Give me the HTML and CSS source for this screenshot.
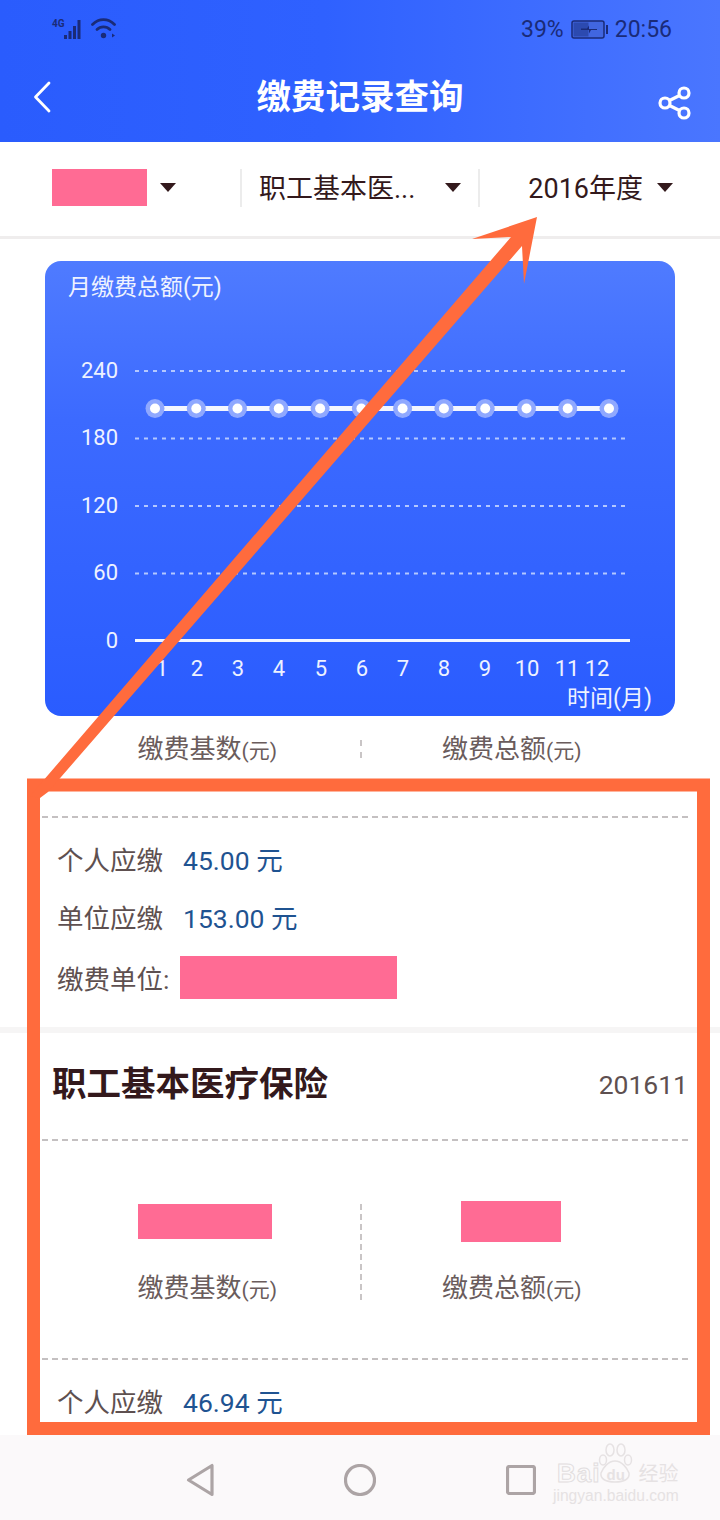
FILE: index.html
```html
<!DOCTYPE html>
<html lang="zh-CN">
<head>
<meta charset="utf-8">
<title>缴费记录查询</title>
<link rel="stylesheet" href="styles.css">
</head>
<body>
<div class="app">
  <header class="header">
    <div class="status">
      <div class="status-left">
        <span class="net">4G</span>
        <svg class="signal" width="20" height="24" viewBox="0 0 20 24"><g fill="#1a2b78"><rect x="0" y="18" width="3" height="4"/><rect x="4.500" y="14" width="3" height="8"/><rect x="9" y="9" width="3" height="13"/><rect x="13.500" y="3" width="3" height="19"/></g></svg>
        <svg class="wifi" width="28" height="24" viewBox="0 0 28 24"><g fill="none" stroke="#1a2b78" stroke-width="2.800" stroke-linecap="round"><path d="M1.500 7.500C8 1 17 1 23.500 7.500"/><path d="M6 12.500C9.500 9 15.500 9 19 12.500"/></g><circle cx="12.500" cy="18.500" r="2.700" fill="#1a2b78"/><path d="M21 16.500l3 2-3 2z" fill="#1a2b78"/></svg>
      </div>
      <div class="status-right">
        <span>39%</span>
        <svg class="battery" width="37" height="19" viewBox="0 0 37 19"><rect x="1" y="1" width="32" height="17" rx="2" fill="#4166e0" stroke="#1a2b78" stroke-width="1.500"/><rect x="2.500" y="2.500" width="15" height="14" fill="#2c4ab0"/><path d="M10 8.500h6l2-3v3.500h8v1h-6l-2 3.500v-3.500h-8z" fill="#1a2b78"/><rect x="35" y="5" width="2" height="9" fill="#1a2b78"/></svg>
        <span>20:56</span>
      </div>
    </div>
    <div class="nav">
      <svg class="back" width="18" height="32" viewBox="0 0 18 32"><path d="M16 2L2.500 16 16 30" fill="none" stroke="#fff" stroke-width="2.800" stroke-linecap="round" stroke-linejoin="round"/></svg>
      <h1 class="title">缴费记录查询</h1>
      <svg class="share" width="33" height="34" viewBox="0 0 33 34"><g fill="none" stroke="#fff" stroke-width="3.200"><circle cx="7" cy="17" r="5"/><circle cx="26" cy="7" r="5"/><circle cx="26" cy="27" r="5"/><path d="M11.500 14.500L21.500 9.500M11.500 19.500L21.500 24.500"/></g></svg>
    </div>
  </header>

  <div class="filters">
    <div class="filter filter-one"><span class="mask mask-name"></span><i class="caret"></i></div>
    <div class="filter filter-two"><span>职工基本医...</span><i class="caret"></i></div>
    <div class="filter filter-three"><span>2016年度</span><i class="caret"></i></div>
  </div>

  <main class="main">
    <section class="chart">
      <svg class="chart-svg" width="630" height="455" viewBox="0 0 630 455">
        <text class="chart-text" x="23" y="34">月缴费总额(元)</text>
        <g class="grid">
          <path d="M90 110H581"/><path d="M90 177.500H581"/><path d="M90 245H581"/><path d="M90 312.500H581"/>
        </g>
        <path class="axis" d="M90 379.500H585"/>
        <g class="chart-num" text-anchor="end">
          <text x="73" y="117">240</text><text x="73" y="184">180</text><text x="73" y="252">120</text><text x="73" y="319">60</text><text x="73" y="387">0</text>
        </g>
        <g class="chart-num" text-anchor="middle">
          <text x="117" y="415">1</text><text x="152" y="415">2</text><text x="193" y="415">3</text><text x="234" y="415">4</text><text x="276" y="415">5</text><text x="317" y="415">6</text><text x="358" y="415">7</text><text x="399" y="415">8</text><text x="440" y="415">9</text><text x="482" y="415">10</text><text x="522" y="415">11</text><text x="552" y="415">12</text>
        </g>
        <text class="chart-text" x="607" y="445" text-anchor="end">时间(月)</text>
        <path class="series" d="M110 147.500H564"/>
        <g class="halo">
          <circle cx="110" cy="147.500" r="9.500"/><circle cx="151.300" cy="147.500" r="9.500"/><circle cx="192.500" cy="147.500" r="9.500"/><circle cx="233.800" cy="147.500" r="9.500"/><circle cx="275.100" cy="147.500" r="9.500"/><circle cx="316.400" cy="147.500" r="9.500"/><circle cx="357.600" cy="147.500" r="9.500"/><circle cx="398.900" cy="147.500" r="9.500"/><circle cx="440.200" cy="147.500" r="9.500"/><circle cx="481.500" cy="147.500" r="9.500"/><circle cx="522.700" cy="147.500" r="9.500"/><circle cx="564" cy="147.500" r="9.500"/>
        </g>
        <g class="dot">
          <circle cx="110" cy="147.500" r="5"/><circle cx="151.300" cy="147.500" r="5"/><circle cx="192.500" cy="147.500" r="5"/><circle cx="233.800" cy="147.500" r="5"/><circle cx="275.100" cy="147.500" r="5"/><circle cx="316.400" cy="147.500" r="5"/><circle cx="357.600" cy="147.500" r="5"/><circle cx="398.900" cy="147.500" r="5"/><circle cx="440.200" cy="147.500" r="5"/><circle cx="481.500" cy="147.500" r="5"/><circle cx="522.700" cy="147.500" r="5"/><circle cx="564" cy="147.500" r="5"/>
        </g>
      </svg>
    </section>

    <section class="stats stats-top">
      <div class="stat"><div class="stat-label">缴费基数<small>(元)</small></div></div>
      <div class="stat-rule stat-rule-short"></div>
      <div class="stat"><div class="stat-label">缴费总额<small>(元)</small></div></div>
    </section>

    <section class="details">
      <div class="row"><span class="row-label">个人应缴</span><span class="row-value">45.00 元</span></div>
      <div class="row"><span class="row-label">单位应缴</span><span class="row-value">153.00 元</span></div>
      <div class="row row-unit"><span class="row-label">缴费单位:</span><span class="mask mask-unit"></span></div>
    </section>

    <section class="record">
      <div class="record-head">
        <h2 class="record-name">职工基本医疗保险</h2>
        <span class="record-date">201611</span>
      </div>
      <div class="stats stats-full">
        <div class="stat"><span class="mask mask-base"></span><div class="stat-label">缴费基数<small>(元)</small></div></div>
        <div class="stat-rule"></div>
        <div class="stat"><span class="mask mask-total"></span><div class="stat-label">缴费总额<small>(元)</small></div></div>
      </div>
      <div class="details">
        <div class="row"><span class="row-label">个人应缴</span><span class="row-value">46.94 元</span></div>
      </div>
    </section>
  </main>

  <nav class="sysnav">
    <svg width="28" height="34" viewBox="0 0 28 34"><path d="M26 2.500V31.500L2.500 17z" fill="none" stroke="#aca4a5" stroke-width="3.200" stroke-linejoin="round"/></svg>
    <svg width="32" height="32" viewBox="0 0 32 32"><circle cx="16" cy="16" r="14.500" fill="none" stroke="#aca4a5" stroke-width="3.200"/></svg>
    <svg width="30" height="30" viewBox="0 0 30 30"><rect x="1.500" y="1.500" width="27" height="27" rx="2" fill="none" stroke="#aca4a5" stroke-width="3.200"/></svg>
  </nav>

  <div class="watermark">
    <svg class="paw" width="42" height="42" viewBox="0 0 42 42"><g fill="none" stroke="#e6e2e3" stroke-width="1.500"><ellipse cx="9" cy="18" rx="3.500" ry="5"/><ellipse cx="16" cy="8" rx="4" ry="6"/><ellipse cx="27" cy="8" rx="4" ry="6"/><ellipse cx="34" cy="18" rx="3.500" ry="5"/><path d="M21 19C28 19 33 26 35 31C36 37 30 40 21 40C12 40 6 37 7 31C9 26 14 19 21 19z"/></g></svg>
    <div class="wm-line"><span class="wm-bai">Bai</span><span class="wm-du">du</span><span class="wm-cn">经验</span></div>
    <div class="wm-url">jingyan.baidu.com</div>
  </div>

  <svg class="annotation" width="720" height="1520" viewBox="0 0 720 1520">
    <rect class="anno-box" x="33.500" y="785" width="670" height="643.500"/>
    <polygon class="anno-arrow" points="537,217 472,239 511,237 30,796 40,798 48,792 522,246 524,284"/>
  </svg>
</div>
</body>
</html>
```

FILE: styles.css
```css
* { box-sizing: border-box; }
html, body { margin: 0; padding: 0; }
body {
  width: 720px;
  height: 1520px;
  overflow: hidden;
  background: #fff;
  font-family: Roboto, "Noto Sans CJK SC", sans-serif;
}
.app {
  position: relative;
  width: 720px;
  height: 1520px;
  display: flex;
  flex-direction: column;
  overflow: hidden;
}

/* header */
.header {
  flex: none;
  height: 142px;
  background: linear-gradient(90deg, #2a5cfd 0%, #2f61ff 45%, #4a76ff 100%);
}
.status {
  height: 58px;
  display: flex;
  align-items: center;
  justify-content: space-between;
  padding: 0 48px 0 52px;
  color: #1a2b78;
  font-size: 23px;
}
.status-left { display: flex; align-items: center; position: relative; }
.net { font-size: 10px; font-weight: 700; line-height: 12px; align-self: flex-start; margin-top: 1px; }
.signal { margin-left: -1px; margin-right: 7px; }
.status-right { display: flex; align-items: center; gap: 7px; }
.nav {
  height: 84px;
  display: grid;
  grid-template-columns: 1fr auto 1fr;
  align-items: center;
  padding: 0 29px;
}
.back { margin-left: 4px; margin-top: -6px; }
.title {
  margin: 0 0 6px;
  color: #fff;
  font-size: 34.500px;
  font-weight: 700;
  line-height: 48px;
}
.share { justify-self: end; margin-top: 6px; }

/* filters */
.filters {
  flex: none;
  height: 97px;
  display: flex;
  align-items: center;
  padding-bottom: 3px;
  border-bottom: 3px solid #efeded;
  color: #33191c;
  font-size: 27px;
}
.filter {
  flex: none;
  width: 240px;
  height: 38px;
  display: flex;
  align-items: center;
  line-height: 38px;
}
.filter span:not(.mask) { position: relative; top: 1px; }
.filter-one { padding-left: 52px; gap: 13px; }
.filter-two {
  justify-content: space-between;
  padding: 0 17px;
  border-left: 2px solid #ececec;
  border-right: 2px solid #ececec;
}
.filter-three { justify-content: flex-end; gap: 14px; padding-right: 47px; }
.caret {
  width: 0;
  height: 0;
  border-left: 8px solid transparent;
  border-right: 8px solid transparent;
  border-top: 9px solid #33191c;
}
.mask { display: block; background: #ff6b94; }
.mask-name { width: 95px; height: 37px; }
.mask-unit { width: 217px; height: 43px; margin-left: 11px; }
.mask-base { width: 134px; height: 35px; margin: 3px 4px 0 0; }
.mask-total { width: 100px; height: 41px; margin: 0 2px 0 0; }

/* main */
.main { flex: 1; min-height: 0; overflow: hidden; }
.chart {
  width: 630px;
  height: 455px;
  margin: 22px 0 0 45px;
  border-radius: 16px;
  overflow: hidden;
  background: linear-gradient(180deg, #4f7bff 0%, #3c6aff 35%, #2a5cff 100%);
}
.chart-svg { display: block; }
.chart-text { fill: #eef2ff; font-size: 23px; font-family: Roboto, "Noto Sans CJK SC", sans-serif; }
.chart-num { fill: #eef2ff; font-size: 22px; font-family: Roboto, sans-serif; }
.grid path { stroke: #b4c8ff; stroke-width: 2; stroke-dasharray: 4 5; fill: none; }
.axis { stroke: #f2f5ff; stroke-width: 3; fill: none; }
.series { stroke: #f3f6ff; stroke-width: 5; fill: none; }
.halo circle { fill: #8fa8ff; }
.dot circle { fill: #fff; }

/* stats */
.stats { display: flex; padding: 0 57px 0 56px; }
.stats-top { height: 100px; padding-top: 19px; align-items: flex-start; }
.stats-full { height: 217px; padding-top: 60px; }
.stat {
  flex: 1;
  display: flex;
  flex-direction: column;
  align-items: center;
}
.stat-label {
  color: #6a5c5c;
  font-size: 26px;
  line-height: 28px;
}
.stat-label small { font-size: 21px; }
.stats-full .mask { flex: none; }
.stats-full .mask-base + .stat-label { margin-top: 35px; }
.stats-full .mask-total + .stat-label { margin-top: 32px; }
.stat-rule { width: 0; height: 96px; margin: 3px -1px 0 1px; border-left: 2px dashed #c9c5c6; }
.stat-rule-short { height: 18px; margin-top: 5px; }

/* details */
.details {
  margin: 0 32px 0 42px;
  padding: 11px 0 0 15px;
  border-top: 2px dashed #c4c0c1;
}
.row {
  height: 58px;
  display: flex;
  align-items: center;
  font-size: 26.500px;
}
.row-unit { height: 65px; margin-bottom: 17px; }
.row-label { color: #5e5050; }
.row-value { color: #1f5391; margin-left: 20px; }

/* record */
.record { border-top: 6px solid #f6f5f5; }
.record-head {
  height: 108px;
  margin: 0 32px 0 42px;
  display: flex;
  align-items: center;
  justify-content: space-between;
  padding: 0 0 4px 10px;
  border-bottom: 2px dashed #c4c0c1;
}
.record-name {
  margin: 0;
  color: #33191c;
  font-size: 34.500px;
  font-weight: 700;
  line-height: 48px;
}
.record-date { color: #5e5050; font-size: 26.500px; }

/* system nav */
.sysnav {
  flex: none;
  height: 85px;
  background: #fbf9fa;
  display: flex;
  align-items: center;
  gap: 130px;
  padding: 4px 0 0 186px;
}

/* overlays */
.annotation { position: absolute; left: 0; top: 0; pointer-events: none; }
.anno-box { fill: none; stroke: #ff6b3d; stroke-width: 13; }
.anno-arrow { fill: #ff6b3d; }
.watermark {
  position: absolute;
  left: 552px;
  top: 1442px;
  width: 130px;
  height: 62px;
  color: #e6e2e3;
}
.paw { position: absolute; left: 42px; top: 0; }
.wm-line {
  position: absolute;
  left: 5px;
  top: 14px;
  display: flex;
  align-items: center;
  line-height: 30px;
  font-family: "Liberation Sans", sans-serif;
  font-weight: 700;
}
.wm-bai {
  font-size: 26px;
  letter-spacing: 1px;
  color: #fbf9fa;
  -webkit-text-stroke: 1px #e2dedf;
}
.wm-du { font-size: 15px; margin: 4px 0 0 6px; width: 28px; }
.wm-cn { font-size: 20px; margin-left: 4px; font-family: "Noto Sans CJK SC", sans-serif; font-weight: 400; }
.wm-url {
  position: absolute;
  left: 1px;
  top: 45px;
  font-size: 15.600px;
  line-height: 18px;
  font-family: "Liberation Sans", sans-serif;
}
```
